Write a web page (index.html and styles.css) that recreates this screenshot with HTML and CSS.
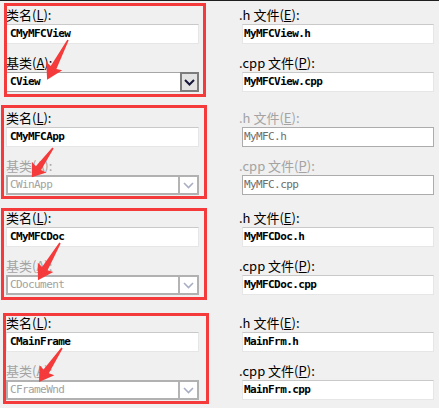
FILE: index.html
```html
<!DOCTYPE html>
<html lang="zh-CN">
<head>
<meta charset="utf-8">
<title>MFC 类</title>
<link rel="stylesheet" href="styles.css">
</head>
<body>
<div class="dialog">
  <section class="group g1">
    <div class="col">
      <div class="field">
        <div class="label">类名(<u>L</u>):</div>
        <div class="edit">CMyMFCView</div>
      </div>
      <div class="field">
        <div class="label">基类(<u>A</u>):</div>
        <div class="combo">
          <span class="combo-text">CView</span>
          <span class="combo-btn active"><svg width="11" height="7" viewBox="0 0 11 7"><polyline points="1,1 5.5,5.5 10,1" /></svg></span>
        </div>
      </div>
    </div>
    <div class="col right">
      <div class="field">
        <div class="label">.h 文件(<u>E</u>):</div>
        <div class="edit file">MyMFCView.h</div>
      </div>
      <div class="field">
        <div class="label">.cpp 文件(<u>P</u>):</div>
        <div class="edit file">MyMFCView.cpp</div>
      </div>
    </div>
  </section>

  <section class="group g2">
    <div class="col">
      <div class="field">
        <div class="label">类名(<u>L</u>):</div>
        <div class="edit">CMyMFCApp</div>
      </div>
      <div class="field disabled">
        <div class="label">基类(<u>A</u>):</div>
        <div class="combo">
          <span class="combo-text">CWinApp</span>
          <span class="combo-btn"><svg width="11" height="7" viewBox="0 0 11 7"><polyline points="1,1 5.5,5.5 10,1" /></svg></span>
        </div>
      </div>
    </div>
    <div class="col right">
      <div class="field disabled">
        <div class="label">.h 文件(<u>E</u>):</div>
        <div class="edit file">MyMFC.h</div>
      </div>
      <div class="field disabled">
        <div class="label">.cpp 文件(<u>P</u>):</div>
        <div class="edit file">MyMFC.cpp</div>
      </div>
    </div>
  </section>

  <section class="group g3">
    <div class="col">
      <div class="field">
        <div class="label">类名(<u>L</u>):</div>
        <div class="edit">CMyMFCDoc</div>
      </div>
      <div class="field disabled">
        <div class="label">基类(<u>A</u>):</div>
        <div class="combo">
          <span class="combo-text">CDocument</span>
          <span class="combo-btn"><svg width="11" height="7" viewBox="0 0 11 7"><polyline points="1,1 5.5,5.5 10,1" /></svg></span>
        </div>
      </div>
    </div>
    <div class="col right">
      <div class="field">
        <div class="label">.h 文件(<u>E</u>):</div>
        <div class="edit file">MyMFCDoc.h</div>
      </div>
      <div class="field">
        <div class="label">.cpp 文件(<u>P</u>):</div>
        <div class="edit file">MyMFCDoc.cpp</div>
      </div>
    </div>
  </section>

  <section class="group g4">
    <div class="col">
      <div class="field">
        <div class="label">类名(<u>L</u>):</div>
        <div class="edit">CMainFrame</div>
      </div>
      <div class="field disabled">
        <div class="label">基类(<u>A</u>):</div>
        <div class="combo">
          <span class="combo-text">CFrameWnd</span>
          <span class="combo-btn"><svg width="11" height="7" viewBox="0 0 11 7"><polyline points="1,1 5.5,5.5 10,1" /></svg></span>
        </div>
      </div>
    </div>
    <div class="col right">
      <div class="field">
        <div class="label">.h 文件(<u>E</u>):</div>
        <div class="edit file">MainFrm.h</div>
      </div>
      <div class="field">
        <div class="label">.cpp 文件(<u>P</u>):</div>
        <div class="edit file">MainFrm.cpp</div>
      </div>
    </div>
  </section>
</div>

<svg class="annot" width="439" height="408" viewBox="0 0 439 408">
  <defs>
    <path id="arrow" d="M0,-0.8 L31,-3.2 L29.5,-9 L45,0 L29.5,9 L31,3.2 L0,0.8 Z" />
  </defs>
  <rect class="frame" x="5.5" y="4.5" width="199" height="91" />
  <rect class="frame" x="2.5" y="106.5" width="203" height="91" />
  <rect class="frame" x="2.5" y="209.5" width="203" height="89" />
  <rect class="frame" x="4.5" y="314.5" width="203" height="88" />
  <use href="#arrow" class="arrow" transform="translate(68 40) rotate(117.7) scale(1.0 1)" />
  <use href="#arrow" class="arrow" transform="translate(53 148) rotate(125.9) scale(0.8 1)" />
  <use href="#arrow" class="arrow" transform="translate(60 243) rotate(120.7) scale(0.96 1)" />
  <use href="#arrow" class="arrow" transform="translate(62 348) rotate(124.1) scale(0.91 1)" />
</svg>
</body>
</html>
```

FILE: styles.css
```css
html, body {
  margin: 0;
  padding: 0;
}

body {
  background: #f0f0f0;
  border-top: 1px solid #1e1e1e;
  position: relative;
  width: 439px;
  height: 407px;
  overflow: hidden;
  font-family: "Noto Sans CJK SC", "Noto Sans", sans-serif;
  color: #000;
}

.dialog {
  display: flex;
  flex-direction: column;
  padding: 5px 0 0 6px;
}

.group {
  display: grid;
  grid-template-columns: 193px 192px;
  column-gap: 43px;
}

.g2 { margin-top: 17px; }
.g3 { margin-top: 14px; }
.g4 { margin-top: 19px; }

.col {
  display: flex;
  flex-direction: column;
  gap: 10px;
}

.field {
  display: flex;
  flex-direction: column;
}

.label {
  height: 18px;
  line-height: 18px;
  font-size: 13px;
  white-space: nowrap;
  color: #000;
}

.label u {
  text-decoration-thickness: 1px;
  text-underline-offset: 1px;
}

.right .label {
  margin-left: -3px;
}

.edit {
  box-sizing: border-box;
  height: 20px;
  background: #fff;
  border: 1px solid #e6e6e6;
  border-top-color: #c9c9c9;
  padding: 0 3px;
  font-family: "DejaVu Sans Mono", "Liberation Mono", monospace;
  font-size: 11px;
  letter-spacing: -0.6px;
  font-weight: bold;
  line-height: 18px;
  white-space: nowrap;
  overflow: hidden;
}

.edit.file {
  padding: 0 1px;
}

.combo {
  box-sizing: border-box;
  height: 20px;
  display: flex;
  background: #fff;
  border: 1px solid #a6a6a6;
}

.combo-text {
  flex: 1;
  padding: 0 3px;
  font-family: "DejaVu Sans Mono", "Liberation Mono", monospace;
  font-size: 11px;
  letter-spacing: -0.6px;
  font-weight: bold;
  line-height: 18px;
  white-space: nowrap;
}

.combo-btn {
  box-sizing: border-box;
  width: 19px;
  display: flex;
  align-items: center;
  justify-content: center;
  background: #fff;
  border-left: 2px solid #b4b4b4;
}

.combo-btn svg polyline {
  fill: none;
  stroke: #a8aec4;
  stroke-width: 1.6;
}

.combo-btn.active {
  background: #e3e3e3;
  border: 2px solid #7c7c7c;
  margin: -1px -1px -1px 0;
}

.combo-btn.active svg polyline {
  stroke: #15163a;
  stroke-width: 2;
}

/* disabled state */
.disabled .label {
  color: #a3a3a3;
}

.disabled .combo {
  border: 2px solid #b1b1b1;
}

.disabled .combo-text {
  color: #a2a2a2;
  font-weight: normal;
  line-height: 16px;
  padding: 0 2px;
}

.disabled .edit {
  border: 1px solid #acacac;
  color: #6d6d6d;
  font-weight: normal;
}

/* annotation overlay */
.annot {
  position: absolute;
  left: 0;
  top: -1px;
  pointer-events: none;
}

.annot .frame {
  fill: none;
  stroke: #f43a3a;
  stroke-width: 3;
}

.annot .arrow {
  fill: #f43a3a;
}
```
